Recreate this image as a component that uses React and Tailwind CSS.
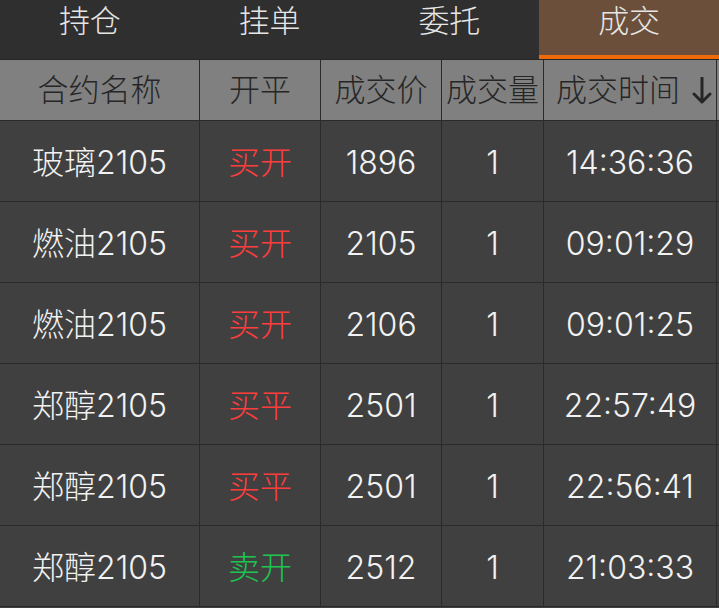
import React from "react";

const tabs = ["持仓", "挂单", "委托", "成交"];

const rows = [
  { name: "玻璃2105", side: "买开", price: "1896", qty: "1", time: "14:36:36" },
  { name: "燃油2105", side: "买开", price: "2105", qty: "1", time: "09:01:29" },
  { name: "燃油2105", side: "买开", price: "2106", qty: "1", time: "09:01:25" },
  { name: "郑醇2105", side: "买平", price: "2501", qty: "1", time: "22:57:49" },
  { name: "郑醇2105", side: "买平", price: "2501", qty: "1", time: "22:56:41" },
  { name: "郑醇2105", side: "卖开", price: "2512", qty: "1", time: "21:03:33" },
];

// column widths incl. right border
const cols = ["w-[200px]", "w-[121px]", "w-[121px]", "w-[102px]", "w-[173px]"];

const DownArrow = () => (
  <svg width="20" height="28" viewBox="0 0 20 28" className="shrink-0">
    <path
      d="M10 1 V25 M2 17 L10 25 L18 17"
      fill="none"
      stroke="#262626"
      strokeWidth="3"
      strokeLinecap="round"
      strokeLinejoin="round"
    />
  </svg>
);

const cell = "shrink-0 flex items-center justify-center pt-[4px] border-r border-[#2a2a2a]";

const App = () => {
  return (
    <div
      className="w-[719px] h-[608px] overflow-hidden bg-[#404040] font-light"
      style={{ fontFamily: 'Inter, "Noto Sans CJK SC", sans-serif' }}
    >
      {/* Tabs */}
      <div className="flex h-[60px] bg-[#2f2f2f] border-b border-[#262626]">
        {tabs.map((t, i) => (
          <div
            key={t}
            className={`flex-1 flex justify-center pt-[1px] text-[31px] leading-[40px] text-[#e6e6e6] ${
              i === 3 ? "bg-[#6b4f3a] border-b-[4px] border-[#f06a0a]" : ""
            }`}
          >
            {t}
          </div>
        ))}
      </div>

      {/* Header */}
      <div className="flex h-[61px] bg-[#808080] border-b border-[#2a2a2a] text-[31px] text-[#262626]">
        {["合约名称", "开平", "成交价", "成交量"].map((h, i) => (
          <div
            key={h}
            className={`${cols[i]} shrink-0 flex items-center justify-center pt-[1px] border-r border-[#2a2a2a]`}
          >
            {h}
          </div>
        ))}
        <div className={`${cols[4]} shrink-0 flex items-center justify-end gap-[12px] pr-[4px] pt-[1px] border-r border-[#2a2a2a]`}>
          成交时间
          <DownArrow />
        </div>
      </div>

      {/* Rows */}
      {rows.map((r, idx) => (
        <div
          key={idx}
          className="flex h-[81px] border-b border-[#2a2a2a] text-[32px] text-[#f2f2f2]"
        >
          <div className={`${cols[0]} ${cell}`}>{r.name}</div>
          <div
            className={`${cols[1]} ${cell} ${
              r.side === "卖开" ? "text-[#1dc44f]" : "text-[#ff3d3d]"
            }`}
          >
            {r.side}
          </div>
          <div className={`${cols[2]} ${cell}`}>{r.price}</div>
          <div className={`${cols[3]} ${cell}`}>{r.qty}</div>
          <div className={`${cols[4]} ${cell}`}>{r.time}</div>
        </div>
      ))}
    </div>
  );
};

export default App;
